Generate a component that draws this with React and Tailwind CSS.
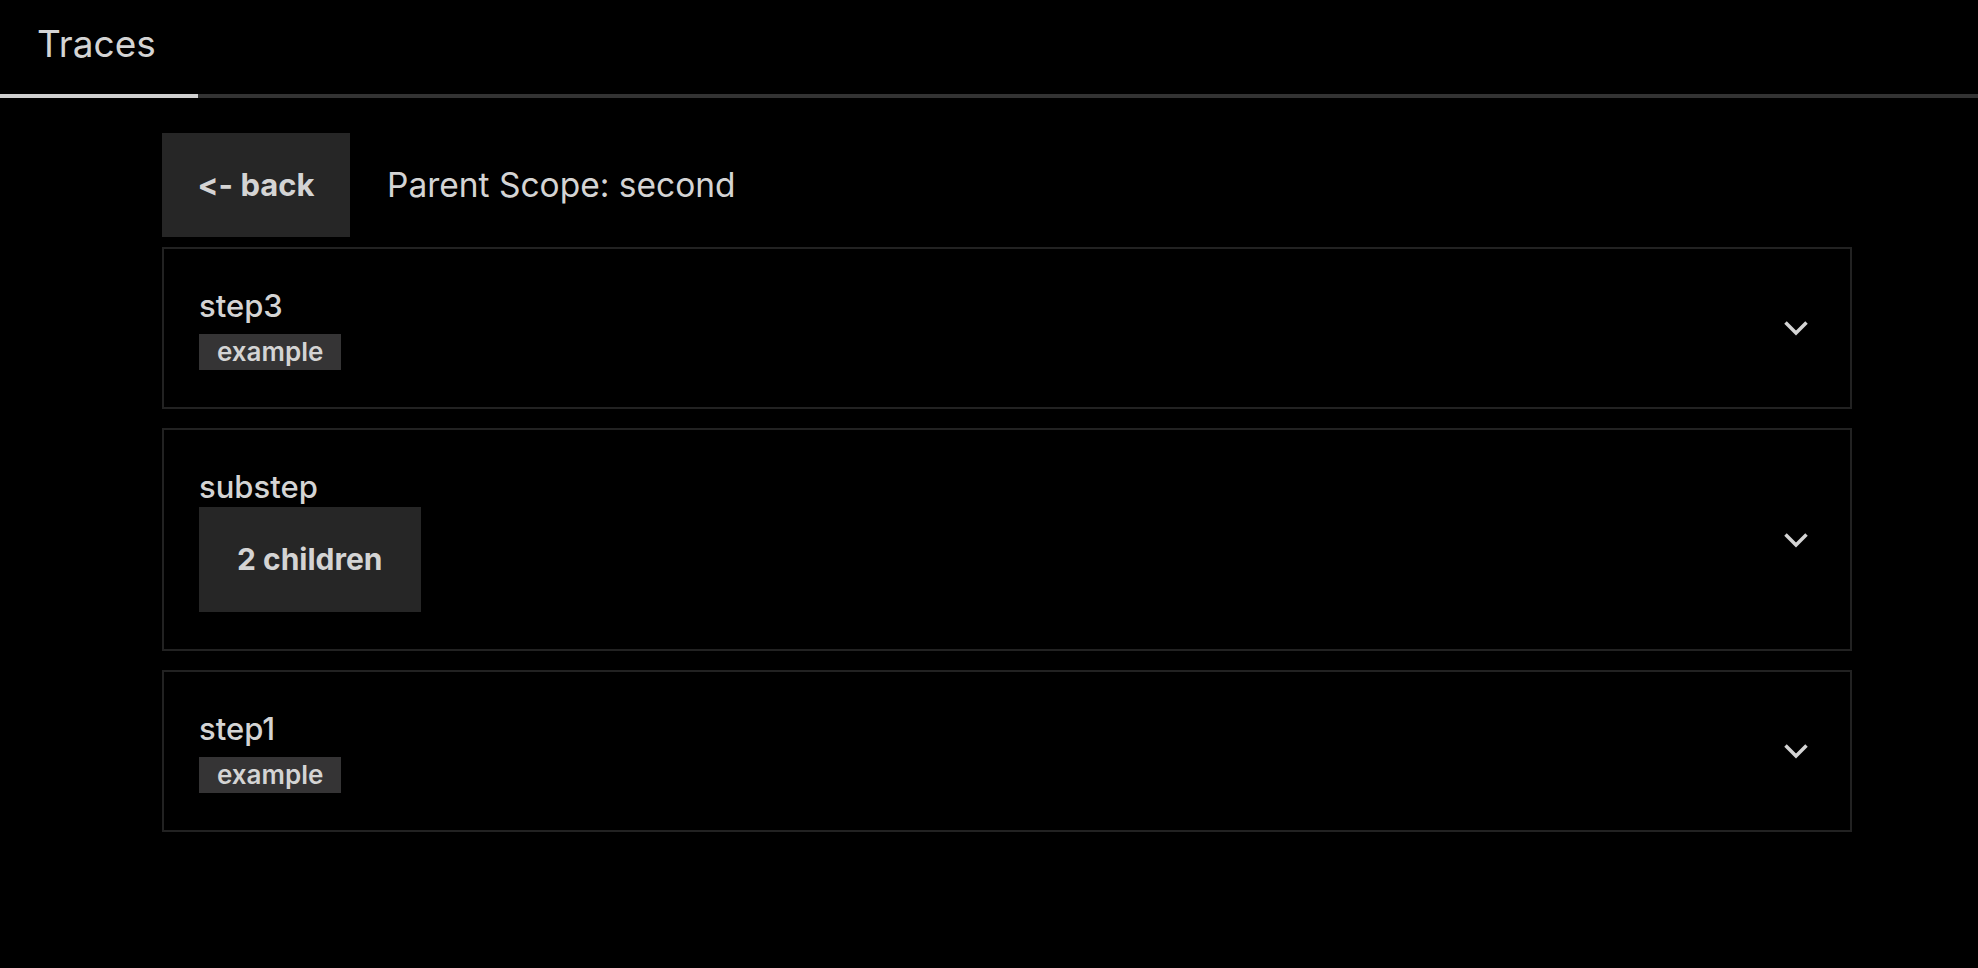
import React from 'react';

const steps = [
  { name: 'step3', tag: 'example' },
  { name: 'substep', children: 2 },
  { name: 'step1', tag: 'example' },
];

function Chevron() {
  return (
    <svg width="26" height="16" viewBox="0 0 26 16" fill="none" className="shrink-0">
      <polyline
        points="2.5,2.5 13,13 23.5,2.5"
        stroke="#d4d4d4"
        strokeWidth="3.5"
        strokeLinecap="butt"
        strokeLinejoin="miter"
      />
    </svg>
  );
}

function StepCard({ step }) {
  return (
    <div className="flex items-center justify-between border-2 border-[#222] pl-[35px] pr-[41px] py-[37px]">
      <div className="flex flex-col items-start">
        <div className="text-[31px] leading-[40px] font-medium">{step.name}</div>
        {step.tag ? (
          <span className="mt-[8px] bg-[#353435] px-[18px] text-[26px] leading-[36px] font-semibold">
            {step.tag}
          </span>
        ) : (
          <button className="bg-[#262626] px-[38px] h-[105px] text-[30px] font-bold text-[#d4d4d4]">
            {step.children} children
          </button>
        )}
      </div>
      <Chevron />
    </div>
  );
}

export default function App() {
  return (
    <div className="min-h-screen bg-black text-[#d4d4d4] font-['Inter',sans-serif] [font-feature-settings:'calt'_0,'liga'_0] [font-variant-ligatures:none]">
      {/* Tabs */}
      <div className="flex border-b-4 border-[#333]">
        <div className="w-[198px] -mb-1 border-b-4 border-[#d0d0d0] pl-[37px] pt-[20px] pb-[26px] text-[37px] leading-[48px]">
          Traces
        </div>
      </div>

      <div className="pl-[162px] pr-[126px] pt-[35px]">
        <div className="flex items-center gap-[37px]">
          <button className="bg-[#262626] w-[188px] h-[104px] text-[31px] font-bold text-[#d4d4d4]">
            {'<- back'}
          </button>
          <span className="text-[33.5px]">Parent Scope: second</span>
        </div>

        <div className="mt-[10px] flex flex-col gap-[19px]">
          {steps.map((s) => (
            <StepCard key={s.name} step={s} />
          ))}
        </div>
      </div>
    </div>
  );
}
